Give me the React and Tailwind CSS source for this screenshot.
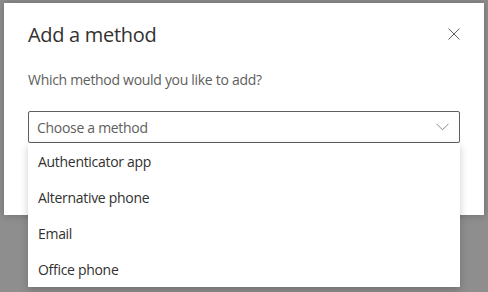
import React from "react";

export default function App() {
  const items = ["Authenticator app", "Alternative phone", "Email", "Office phone"];
  return (
    <div
      className="w-[488px] h-[292px] overflow-hidden bg-[#8e8e8e] pt-[3px] pl-[4px]"
      style={{ fontFamily: '"Open Sans", "Noto Sans", Arial, sans-serif' }}
    >
      <div className="relative w-[480px] h-[212px] bg-white shadow-[0_0_8px_rgba(0,0,0,0.25)]">
        <div className="flex items-start justify-between pl-[24px] pr-[24px] pt-[18px]">
          <h1 className="text-[20px] leading-[28px] font-medium text-[#323130] tracking-[-0.3px]">Add a method</h1>
          <button className="mt-[7px] w-[12px] h-[12px] text-[#605e5c]">
            <svg width="12" height="12" viewBox="0 0 12 12" fill="none" stroke="currentColor" strokeWidth="1">
              <path d="M0.5 0.5 L11.5 11.5 M11.5 0.5 L0.5 11.5" />
            </svg>
          </button>
        </div>
        <p className="pl-[24px] mt-[21px] text-[14px] leading-[20px] text-[#605e5c] tracking-[-0.3px]">
          Which method would you like to add?
        </p>
        <div className="ml-[24px] mt-[21px] w-[432px] h-[32px] border border-[#605e5c] rounded-[2px] flex items-center justify-between pl-[8px] pr-[10px]">
          <span className="text-[14px] text-[#605e5c] tracking-[-0.3px]">Choose a method</span>
          <svg width="13" height="8" viewBox="0 0 13 8" fill="none" stroke="#8a8886" strokeWidth="1">
            <path d="M0.5 0.8 L6.5 6.8 L12.5 0.8" />
          </svg>
        </div>
        <div className="absolute left-[24px] top-[140px] w-[432px] bg-white shadow-[0_3px_8px_rgba(0,0,0,0.2)] flex flex-col">
          {items.map((t) => (
            <div key={t} className="h-[36px] flex items-center pl-[10px] text-[14px] text-[#323130] tracking-[-0.3px]">
              {t}
            </div>
          ))}
        </div>
      </div>
    </div>
  );
}
